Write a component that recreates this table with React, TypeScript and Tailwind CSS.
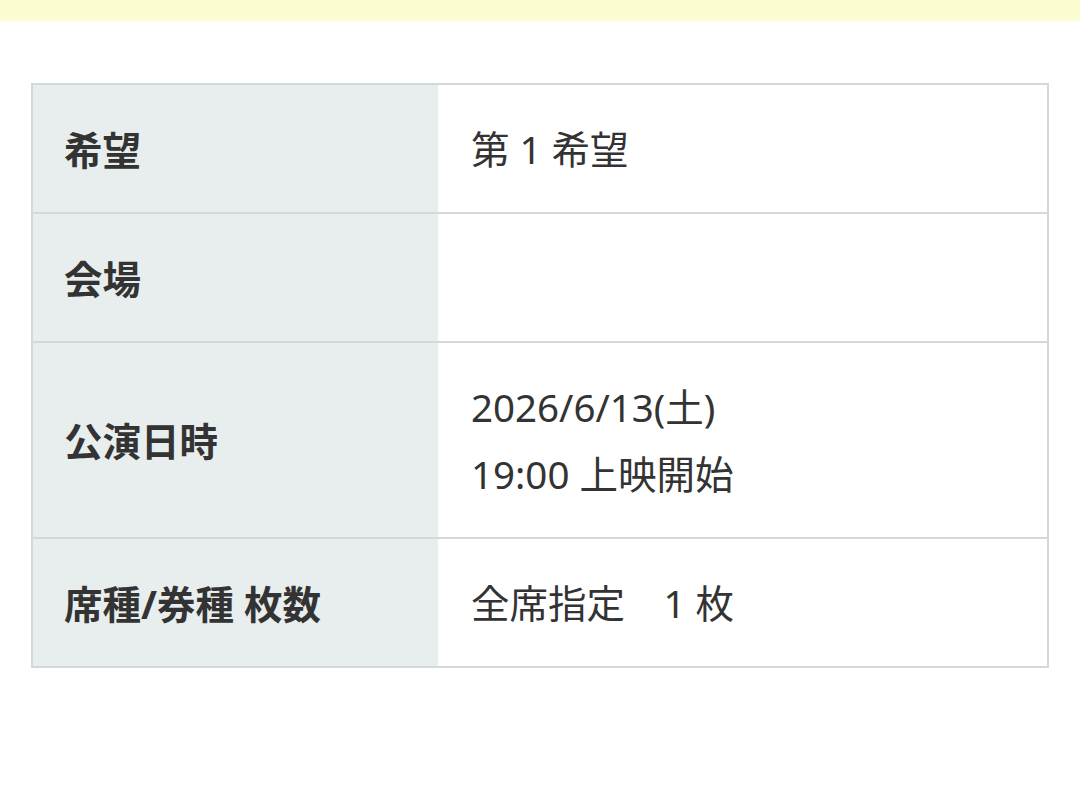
const rows: { label: string; lines: string[] }[] = [
  { label: "希望", lines: ["第 1 希望"] },
  { label: "会場", lines: [""] },
  { label: "公演日時", lines: ["2026/6/13(土)", "19:00 上映開始"] },
  { label: "席種/券種 枚数", lines: ["全席指定　1 枚"] },
];

export default function App() {
  return (
    <div
      className="min-h-[805px] w-full bg-white text-[#333]"
      style={{ fontFamily: '"Noto Sans", "Noto Sans CJK JP", sans-serif' }}
    >
      <div className="h-[22px] w-full bg-gradient-to-b from-[#fbfdd0] from-80% to-[#fdfee8]" />
      <div className="px-[31px] pt-[61px]">
        <div className="border-2 border-[#d3d9d9]">
          {rows.map((row, i) => (
            <div
              key={row.label}
              className={
                i === 0 ? "flex" : "flex border-t-2 border-[#d3d9d9]"
              }
            >
              <div className="flex w-[405px] shrink-0 items-center bg-[#e8eded] pl-[31px] pt-[3px] text-[38.5px] font-bold leading-[67px]">
                {row.label}
              </div>
              <div className="flex-1 bg-white pt-[31px] pb-[29px] pl-[33px] text-[38.5px] leading-[67px]">
                {row.lines.map((line, j) => (
                  <div key={j} className="h-[67px] whitespace-pre">
                    {line}
                  </div>
                ))}
              </div>
            </div>
          ))}
        </div>
      </div>
    </div>
  );
}
